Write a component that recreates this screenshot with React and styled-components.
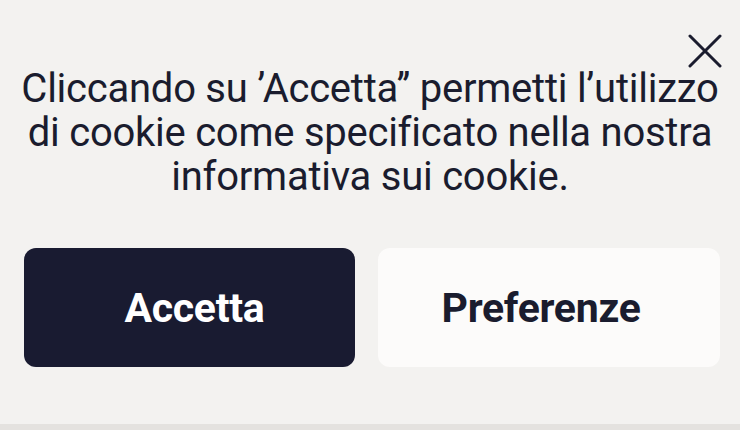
import React from 'react'
import styled, { createGlobalStyle } from 'styled-components'

const GlobalStyle = createGlobalStyle`
  html, body {
    margin: 0;
    padding: 0;
    background: #f3f2f0;
  }
  body {
    font-family: Roboto, "Liberation Sans", sans-serif;
    color: #1a1c2e;
  }
`

const Banner = styled.div`
  width: 740px;
  height: 430px;
  box-sizing: border-box;
  display: flex;
  flex-direction: column;
  background: #f3f2f0;
  border-bottom: 6px solid #e4e2df;
`

const TopBar = styled.div`
  display: flex;
  justify-content: flex-end;
  padding: 33px 17px 0 0;
  height: 36px;
`

const CloseButton = styled.button`
  border: none;
  background: none;
  padding: 0;
  width: 36px;
  height: 36px;
  cursor: pointer;
  display: flex;
  align-items: center;
  justify-content: center;
  color: #1a1c2e;
`

const Message = styled.p`
  margin: -2px 0 0;
  padding: 0 10px;
  text-align: center;
  font-size: 40px;
  line-height: 44px;
  letter-spacing: -0.25px;
  font-weight: 400;
  color: #1a1c2e;
`

const Actions = styled.div`
  display: grid;
  grid-template-columns: 331px 342px;
  gap: 23px;
  padding: 0 20px 0 24px;
  margin-top: 49px;
`

const Button = styled.button`
  height: 119px;
  border-radius: 12px;
  border: none;
  padding: 0 ${props => (props.primary ? '0 0 10px' : '16px 0 0')};
  font-family: Roboto, "Liberation Sans", sans-serif;
  font-size: 41px;
  font-weight: 700;
  letter-spacing: -0.3px;
  cursor: pointer;
  background: ${props => (props.primary ? '#191b31' : '#fcfbfa')};
  color: ${props => (props.primary ? '#ffffff' : '#1a1c2e')};
`

export default function App() {
  return (
    <>
      <GlobalStyle />
      <Banner>
        <TopBar>
          <CloseButton aria-label="Chiudi">
            <svg width="34" height="34" viewBox="0 0 34 34" fill="none">
              <path d="M2 2 L32 32 M32 2 L2 32" stroke="currentColor" strokeWidth="3" strokeLinecap="round" />
            </svg>
          </CloseButton>
        </TopBar>
        <Message>
          Cliccando su ’Accetta’’ permetti l’utilizzo
          <br />
          di cookie come specificato nella nostra
          <br />
          informativa sui cookie.
        </Message>
        <Actions>
          <Button primary>Accetta</Button>
          <Button>Preferenze</Button>
        </Actions>
      </Banner>
    </>
  )
}
